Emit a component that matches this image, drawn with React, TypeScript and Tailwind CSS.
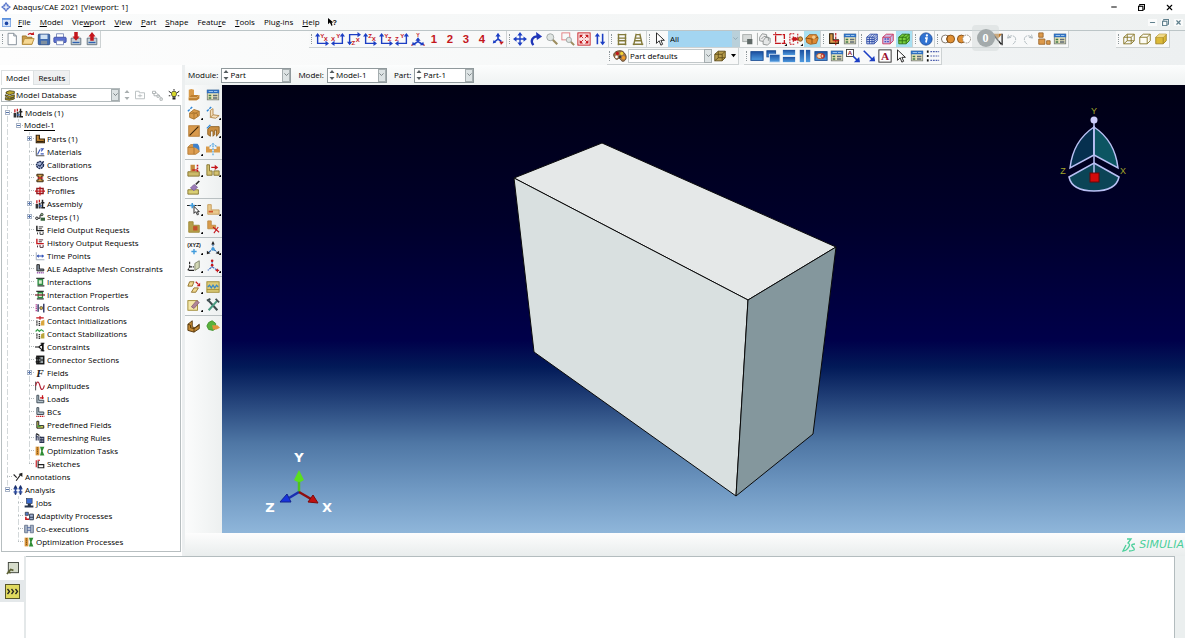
import type { ReactNode } from "react";
import { Minus, X } from "lucide-react";

const BLUE = "#1c3fc4";
const RED = "#c4161c";
const TAN = "#d99b4a";
const BROWN = "#7a4d12";

/* ---------- icon helpers ---------- */

function Svg({ children, size = 16 }: { children: ReactNode; size?: number }) {
  return (
    <svg viewBox="0 0 16 16" width={size} height={size} fill="none" className="block shrink-0 overflow-visible" aria-hidden="true">
      {children}
    </svg>
  );
}

function Letter({ x, y, children, fill = RED }: { x: number; y: number; children: string; fill?: string }) {
  return (
    <text x={x} y={y} fontSize="7" fontWeight="bold" fontFamily="Liberation Sans, sans-serif" fill={fill}>
      {children}
    </text>
  );
}

function CornerLeft({ v, h }: { v: string; h: string }) {
  return (
    <>
      <path d="M3 3V13H13" stroke={BLUE} strokeWidth="1.6" />
      <path d="M0 5L3 1L6 5ZM12 10L16 13L12 16Z" fill={BLUE} />
      <Letter x={6} y={7}>{v}</Letter>
      <Letter x={10} y={10}>{h}</Letter>
    </>
  );
}

function CornerRight({ v, h }: { v: string; h: string }) {
  return (
    <>
      <path d="M13 3V13H3" stroke={BLUE} strokeWidth="1.6" />
      <path d="M10 5L13 1L16 5ZM4 10L0 13L4 16Z" fill={BLUE} />
      <Letter x={6} y={7}>{v}</Letter>
      <Letter x={0} y={10}>{h}</Letter>
    </>
  );
}

function Digit({ children }: { children: string }) {
  return (
    <text x="8" y="13" textAnchor="middle" fontSize="13" fontWeight="bold" fontFamily="Liberation Sans, sans-serif" fill={RED}>
      {children}
    </text>
  );
}

function Cube({ face, line }: { face: string; line: string }) {
  return (
    <>
      <path d="M2 6L6 2.5H14V10L10.5 13.5H2Z" fill={face} stroke={line} />
      <path d="M2 6H10.5V13.5M10.5 6L14 2.5" stroke={line} />
    </>
  );
}

function Panel() {
  return (
    <>
      <rect x="1.5" y="2.5" width="13" height="11" fill="#e9e3b8" stroke="#777f78" />
      <rect x="1" y="2" width="14" height="4" fill="#2f6fc0" />
      <path d="M3 4h10" stroke="#a9d0f4" strokeDasharray="5 1" />
      <path d="M3 8.5h3M3 11.5h3" stroke="#3d7a4a" strokeWidth="1.6" />
      <path d="M8 8.5h5M8 11.5h5" stroke="#5b6a78" strokeWidth="1.6" />
    </>
  );
}

const ARROW = "M4 1V13L7 10L9 15L11 14L9 9.5H13Z";

const icons: Record<string, ReactNode> = {
  newFile: <path d="M3.5 1.5H10L13 4.5V14.5H3.5ZM10 1.5V4.5H13" fill="#fff" stroke="#7c8791" />,
  open: (
    <>
      <path d="M1.5 14V4.5H6L7 6H12.5V14Z" fill="#c99b4a" stroke="#9b7226" />
      <path d="M1.5 14L4 7.5H15L12.5 14Z" fill="#f6d893" stroke="#b48a37" />
      <path d="M8 3Q11 0 13 3" stroke={RED} strokeWidth="1.5" />
      <path d="M10.5 3.5H15L14.5 0Z" fill={RED} />
    </>
  ),
  save: (
    <>
      <rect x="1.5" y="2.5" width="13" height="12" rx="1" fill="#3f6bb0" stroke="#274a85" />
      <rect x="4" y="3" width="8" height="5" fill="#cfe2f4" />
      <rect x="4.5" y="10" width="7" height="4" fill="#7f8f9f" />
    </>
  ),
  print: (
    <>
      <path d="M4 6V2H12V6" fill="#fff" stroke="#7384b5" />
      <rect x="1" y="6" width="14" height="6" rx="1" fill="#5b6fd0" stroke="#3a4ba3" />
      <path d="M4 10H12V14.5H4Z" fill="#fff" stroke="#7384b5" />
    </>
  ),
  dbDown: (
    <>
      <path d="M2.5 7H13.5V14.5H2.5Z" fill="#c7d0d6" stroke="#5d6d7a" />
      <path d="M4 12H12" stroke="#2f62b0" strokeWidth="1.5" />
      <path d="M6 0H10V5H12L8 10L4 5H6Z" fill={RED} />
    </>
  ),
  dbUp: (
    <>
      <path d="M2.5 7H13.5V14.5H2.5Z" fill="#c7d0d6" stroke="#5d6d7a" />
      <path d="M4 12H12" stroke="#2f62b0" strokeWidth="1.5" />
      <path d="M6 10H10V5H12L8 0L4 5H6Z" fill={RED} />
    </>
  ),
  xy: <CornerLeft v="Y" h="X" />,
  yx: <CornerRight v="Y" h="X" />,
  xz: (
    <>
      <path d="M3 13V3H13" stroke={BLUE} strokeWidth="1.6" />
      <path d="M0 11L3 15L6 11ZM12 0L16 3L12 6Z" fill={BLUE} />
      <Letter x={10} y={11}>X</Letter>
      <Letter x={5} y={15}>Z</Letter>
    </>
  ),
  zx: <CornerLeft v="Z" h="X" />,
  yz: <CornerLeft v="Y" h="Z" />,
  zy: <CornerRight v="Y" h="Z" />,
  iso: (
    <>
      <path d="M8 8V11L3 14M8 11L13 14" stroke={BLUE} strokeWidth="1.8" />
      <path d="M5 10L8 6L11 10ZM1 15L2 11L6 15ZM15 15L14 11L10 15Z" fill={BLUE} />
      <text x="8" y="6" textAnchor="middle" fontSize="6" fontWeight="bold" fontFamily="Liberation Sans, sans-serif" fill={RED}>
        Y
      </text>
      <path d="M0 15h2M14 15h2" stroke={RED} />
    </>
  ),
  v1: <Digit>1</Digit>,
  v2: <Digit>2</Digit>,
  v3: <Digit>3</Digit>,
  v4: <Digit>4</Digit>,
  csys: (
    <>
      <path d="M8 2V8L3 12M8 8L12 11" stroke={BLUE} strokeWidth="1.8" />
      <path d="M5 5L8 1L11 5ZM2 13L3 9L6 12Z" fill={BLUE} />
      <path d="M10 11L13 13M11 14L14 11" stroke={RED} strokeWidth="1.5" />
    </>
  ),
  pan: (
    <>
      <path d="M8 3V13M3 8H13" stroke={BLUE} strokeWidth="1.5" />
      <path d="M8 0L11 4H5ZM8 16L11 12H5ZM0 8L4 5V11ZM16 8L12 5V11Z" fill={BLUE} />
    </>
  ),
  rotate: (
    <>
      <path d="M5 15C1 10 4 5 10 5" stroke="#2036b8" strokeWidth="2.6" />
      <path d="M8 0L15 5L9 9Z" fill="#2036b8" />
    </>
  ),
  zoom: (
    <>
      <path d="M8 8L14 14" stroke="#9c8d5f" strokeWidth="2.4" />
      <circle cx="6" cy="6" r="4" fill="#dfe5e2" stroke="#9da5a3" />
    </>
  ),
  zoomBox: (
    <>
      <rect x="1" y="1" width="9" height="8" stroke="#e0777a" />
      <path d="M10 10L15 15" stroke="#9c8d5f" strokeWidth="2.2" />
      <circle cx="9" cy="9" r="3" fill="#dfe5e2" stroke="#9da5a3" />
    </>
  ),
  fit: (
    <>
      <rect x="1" y="1" width="14" height="14" fill="#fbe3e3" stroke={RED} />
      <path d="M3 3H7L3 7ZM13 3H9L13 7ZM3 13H7L3 9ZM13 13H9L13 9Z" fill={RED} />
      <path d="M4 4L7 7M12 4L9 7M4 12L7 9M12 12L9 9" stroke={RED} />
    </>
  ),
  cycle: (
    <>
      <path d="M5 4V14M11 2V12" stroke={BLUE} strokeWidth="1.8" />
      <path d="M2 5L5 1L8 5ZM8 11L11 15L14 11Z" fill={BLUE} />
    </>
  ),
  persOff: <path d="M4 2V15M12 2V15M3 3H13M3 7H13M3 10H13M3 14H13" stroke="#837a3a" strokeWidth="1.6" />,
  persOn: <path d="M6 2L3 15M10 2L13 15M5 3H11M5 7H11M4 10H12M2 14H14" stroke="#837a3a" strokeWidth="1.6" />,
  cursor: <path d={ARROW} fill="#fff" stroke="#111" />,
  dim: (
    <>
      <rect x="2" y="3" width="10" height="8" fill="#d7dad9" stroke="#a3a8a7" />
      <rect x="7" y="8" width="6" height="6" fill="#5f6967" />
    </>
  ),
  stack: (
    <>
      <path d="M0.5 1V15" stroke="#a3a8a7" />
      <path d="M3 6L6 2L11 3V8L8 11L3 10Z" fill="#eee" stroke="#8a8f8f" />
      <path d="M7 10L10 6L15 7V12L12 15L7 14Z" fill="#e5e7e7" stroke="#8a8f8f" />
      <path d="M5 8L8 5L13 6V10" stroke="#8a8f8f" />
    </>
  ),
  selBox: (
    <>
      <path d="M3 3H13V13H3Z" stroke={RED} strokeWidth="1.5" strokeDasharray="7 1" />
      <path d="M0 3H3M3 0V3M12 13H15" stroke={RED} />
      <path d="M16 13V16H13Z" fill="#111" />
    </>
  ),
  selIn: (
    <>
      <path d="M1 2V14M1 2H6M1 14H6M10 2V14" stroke={RED} strokeWidth="1.2" strokeDasharray="2 1" />
      <path d="M3 8H13M5 5V11" stroke={RED} strokeWidth="1.6" />
      <circle cx="7" cy="8" r="2.2" fill={RED} />
      <circle cx="13" cy="8" r="2.5" fill={TAN} stroke={BROWN} />
      <path d="M16 13V16H13Z" fill="#111" />
    </>
  ),
  selPart: (
    <>
      <path d="M1 7L5 3L13 3L15 7L13 13L6 14L2 12Z" fill="#dd8b35" stroke="#a15f1a" />
      <path d="M1 7L8 8L15 6M8 8V13" stroke="#824c13" />
      <circle cx="10" cy="6" r="2" fill="#f4c98b" />
    </>
  ),
  mark: (
    <>
      <path d="M3 2H7V9H13V13H3Z" fill={TAN} stroke="#33220c" strokeWidth="1.3" />
      <path d="M10 1V15M7 10H15" stroke={RED} strokeWidth="1.3" strokeDasharray="3 1" />
    </>
  ),
  panel: <Panel />,
  meshCube: (
    <>
      <Cube face="#dbe4f6" line="#2746a3" />
      <path d="M2 8.5H10.5L14 5M2 11H10.5L14 7.5M5 6V13.5M8 6V13.5M5 6L8.5 2.5M8 6L11.5 2.5" stroke="#2746a3" />
    </>
  ),
  dotCube: (
    <>
      <Cube face="#cbbbe6" line="#c9305a" />
      <path d="M4 8H9M4 11H9" stroke="#4652bd" strokeWidth="1.5" strokeDasharray="2 1" />
    </>
  ),
  greenCube: (
    <>
      <Cube face="#78cf3d" line="#2c7011" />
      <path d="M2 10H10.5L14 6M6 6V13.5M6 6L10 2.5" stroke="#2c7011" />
    </>
  ),
  info: (
    <>
      <circle cx="8" cy="8" r="7" fill="#2f72d2" stroke="#1e4e9d" />
      <circle cx="9" cy="4" r="1.3" fill="#fff" />
      <path d="M7 7H9L8 12" stroke="#fff" strokeWidth="2" />
    </>
  ),
  boolA: (
    <>
      <circle cx="5" cy="8" r="4.5" fill="#fff" stroke="#72675a" />
      <circle cx="11" cy="8" r="4.5" fill="#e09034" stroke="#7b4a16" />
      <path d="M8 4Q5 8 8 12" stroke="#7b4a16" />
    </>
  ),
  boolB: (
    <>
      <circle cx="5" cy="8" r="4.5" fill="#e09034" stroke="#7b4a16" />
      <circle cx="11" cy="8" r="4.5" fill="#fff" stroke="#8d8579" strokeDasharray="2 1" />
    </>
  ),
  boolC: (
    <>
      <rect x="1" y="2" width="14" height="12" fill="#f3f4f3" />
      <path d="M2 2H15L10 8Z" fill="#bf7a2b" />
      <path d="M4 2L14 14M15 2V15" stroke="#222" strokeWidth="1.4" />
    </>
  ),
  undo: <path d="M3 7L4 3M3 7L7 6M3 7C8 1 15 6 11 12L9 14" stroke="#a9b3b8" strokeDasharray="6 1" />,
  redo: <path d="M13 7L12 3M13 7L9 6M13 7C8 1 1 6 5 12L7 14" stroke="#a9b3b8" strokeDasharray="6 1" />,
  regen: <path d="M2 1H7V6H2ZM2 8H9V14H2ZM11 10H15V14H11Z" fill="#dd9a4b" stroke="#9a6529" />,
  wire: (
    <>
      <path d="M2 6L6 2.5H14V10L10.5 13.5H2ZM2 6H10.5V13.5M10.5 6L14 2.5" stroke="#857321" />
      <path d="M6 2.5V10H14M2 13.5L6 10" stroke="#857321" />
    </>
  ),
  hidden: <Cube face="#fdfcf4" line="#857321" />,
  shaded: (
    <>
      <Cube face="#dcb937" line="#a08426" />
      <path d="M2 6L6 2.5H14L10.5 6Z" fill="#f0d987" />
    </>
  ),
  palette: (
    <>
      <path d="M8 2C3 2 0 5 1 8S4 13 6 11S9 15 12 14S16 9 14 6S11 2 8 2Z" fill="#a4794c" stroke="#52361c" />
      <circle cx="5" cy="5" r="1.8" fill={RED} />
      <circle cx="10" cy="5" r="1.8" fill="#f0d233" />
      <circle cx="12" cy="10" r="2" fill="#f19a25" />
      <circle cx="4" cy="9" r="1.5" fill="#fff" />
      <circle cx="8" cy="9" r="1.5" fill="#3a3a3a" />
    </>
  ),
  oliveCube: (
    <>
      <Cube face="#b89d4c" line="#5c4a17" />
      <path d="M6 2.5V10H14M2 13.5L6 10" stroke="#5c4a17" />
    </>
  ),
  vpOne: <rect x="1" y="3" width="14" height="10" fill="url(#vp)" stroke="#15478f" />,
  vpCascade: (
    <>
      <rect x="1" y="2" width="10" height="7" fill="url(#vp)" stroke="#15478f" />
      <rect x="4" y="6" width="12" height="9" fill="url(#vp)" stroke="#dce9f8" />
    </>
  ),
  vpRows: (
    <>
      <rect x="1" y="1" width="14" height="6" fill="url(#vp)" />
      <rect x="1" y="9" width="14" height="6" fill="url(#vp)" />
    </>
  ),
  vpCols: (
    <>
      <rect x="2" y="1" width="5" height="14" fill="url(#vp)" />
      <rect x="9" y="1" width="5" height="14" fill="url(#vp)" />
    </>
  ),
  vpLink: (
    <>
      <rect x="1" y="3" width="14" height="10" fill="url(#vp)" stroke="#15478f" />
      <ellipse cx="7" cy="8" rx="4" ry="3" fill="#f7d9b0" stroke="#c0521f" />
      <ellipse cx="10" cy="8" rx="2" ry="2.5" stroke={RED} />
    </>
  ),
  noteArrow: (
    <>
      <rect x="0.5" y="0.5" width="8" height="8" fill="#fff" stroke="#333" />
      <Letter x={2} y={7} fill="#8a1430">A</Letter>
      <path d="M8 8L13 13" stroke={BLUE} strokeWidth="1.8" />
      <path d="M9 15H16L15 9Z" fill={BLUE} />
    </>
  ),
  blueArrow: (
    <>
      <path d="M2 2L12 12" stroke={BLUE} strokeWidth="1.8" />
      <path d="M8 14H15L14 8Z" fill={BLUE} />
    </>
  ),
  noteA: (
    <>
      <rect x="1" y="1" width="14" height="14" fill="#fff" stroke="#222" />
      <text x="8" y="13" textAnchor="middle" fontSize="13" fontWeight="bold" fontFamily="Liberation Serif, serif" fill="#9b1030">
        A
      </text>
    </>
  ),
  list: (
    <>
      <path d="M1 3h2M1 8h2M1 13h2" stroke="#111" strokeWidth="2.5" />
      <path d="M5 3h10M5 8h10M5 13h10" stroke="#4d5fae" strokeWidth="1.2" strokeDasharray="2 1" />
    </>
  ),

  /* toolbox */
  tPart: (
    <>
      <path d="M2 2L5 1L8 2V8H14V12L11 14H2Z" fill={TAN} />
      <path d="M5 8H14V12L11 14H2V11Z" fill="#bd7f30" />
      <path d="M2 11H11L14 8" stroke="#e8bb7c" />
    </>
  ),
  tExtrude: (
    <>
      <path d="M3 8L8 4L14 6V11L8 15L3 13Z" fill={TAN} stroke="#a8742d" />
      <path d="M8 15V9L14 6M8 9L3 8M6 7L12 9V12" stroke="#a8742d" />
      <path d="M1 6L6 1" stroke="#2f86d5" strokeWidth="1.6" strokeDasharray="3 1" />
    </>
  ),
  tShell: (
    <>
      <path d="M5 5L8 3V10L15 11L11 14L5 13Z" fill="#f3dfbd" stroke="#b08445" />
      <path d="M5 13L8 10" stroke="#b08445" />
      <path d="M1 6L6 1" stroke="#2f86d5" strokeWidth="1.6" strokeDasharray="3 1" />
    </>
  ),
  tWire: (
    <>
      <rect x="2" y="2" width="12" height="12" fill="#d99a4c" stroke="#b47a33" />
      <path d="M3 13L13 3" stroke="#3d2609" strokeWidth="1.3" />
    </>
  ),
  tCut: (
    <>
      <path d="M2 6L5 3H15V10L12 14V7H10V12L8 14V8H5V14L2 12Z" fill="#c98e42" stroke="#8a5c1c" />
      <path d="M1 5L5 1" stroke="#2f86d5" strokeWidth="1.6" />
    </>
  ),
  tRound: (
    <>
      <path d="M1 6L4 3H12L14 11L10 14H1Z" fill="#dd9d50" stroke="#b47a33" />
      <path d="M1 6H8V14" stroke="#a8742d" />
      <path d="M7 2H12Q15 5 14 10Q11 6 7 6Z" fill="#3f82cc" />
    </>
  ),
  tMirror: (
    <>
      <path d="M0 5H4V8H7V12H0ZM16 5H12V8H9V12H16Z" fill={TAN} />
      <path d="M8 1V15M4 5L7 3M12 5L9 3" stroke="#3f9bdc" strokeWidth="1.3" strokeDasharray="2 1" />
    </>
  ),
  tHole: (
    <>
      <path d="M1 10H14V15H1Z" fill="#cdbb6a" stroke="#80702a" />
      <path d="M4 2H9V10H4Z" fill="#c58a3c" />
      <path d="M12 2V10" stroke={RED} strokeWidth="1.8" strokeDasharray="2 1" />
      <path d="M6 8H12" stroke={RED} strokeWidth="1.4" />
    </>
  ),
  tMove: (
    <>
      <path d="M1 2H4V9H7V14H1ZM9 9H15V14H9Z" fill="#d4c271" stroke="#80702a" />
      <path d="M6 5H11" stroke={RED} strokeWidth="1.4" />
      <path d="M10 2L14 5L10 8Z" fill={RED} />
    </>
  ),
  tErase: (
    <>
      <path d="M1 10H13V15H1Z" fill="#d9cf74" stroke="#80702a" />
      <path d="M4 8L8 4L12 7L8 11Z" fill="#9b79b8" stroke="#7a6292" />
      <path d="M10 4L14 0" stroke="#333" strokeWidth="2" />
    </>
  ),
  tPick: (
    <>
      <path d="M0 4H16" stroke="#222" strokeWidth="1.4" strokeDasharray="5 1" />
      <path d="M6 1V7M3 4H9" stroke="#3f9bdc" strokeWidth="1.8" />
      <path d="M8 5V13L10 11L12 15L13 14L12 11H14Z" fill="#fff" stroke="#111" />
    </>
  ),
  tEdge: (
    <>
      <path d="M2 3H6V9H15V14H2Z" fill="#e8c98d" stroke="#c69a57" />
      <path d="M3 11H8" stroke="#d0532c" strokeWidth="2" />
    </>
  ),
  tCell: (
    <>
      <path d="M2 2H7V6H14V14H2Z" fill="#b6a04a" stroke="#9c8734" />
      <rect x="7" y="7" width="5" height="5" fill="#c3502c" />
    </>
  ),
  tCutCell: (
    <>
      <path d="M2 1H6V6H11V10H2Z" fill={TAN} stroke="#bd8a45" />
      <path d="M8 8L15 14M14 8L9 15" stroke={RED} strokeWidth="1.2" />
    </>
  ),
  tXyz: (
    <>
      <text x="8" y="7" textAnchor="middle" fontSize="6" fontWeight="bold" fontFamily="Liberation Sans, sans-serif" fill="#111">
        (XYZ)
      </text>
      <path d="M8 9V15M5 12H11" stroke="#3f9bdc" strokeWidth="1.6" />
    </>
  ),
  tAxis: (
    <>
      <path d="M8 2V9L3 13M8 9L13 13" stroke="#2f68a8" strokeWidth="1.3" strokeDasharray="4 1" />
      <path d="M6 4L8 0L10 4ZM1 15V11L5 14ZM15 15V11L11 14Z" fill="#222" />
      <circle cx="8" cy="9" r="2" fill="#3f9bdc" />
    </>
  ),
  tPlane: (
    <>
      <path d="M9 5L14 2V10L9 13Z" fill="#d2d7b4" stroke="#7a8066" />
      <path d="M3 3V9L1 13M3 9H8" stroke="#222" strokeWidth="1.3" strokeDasharray="3 1" />
      <path d="M2 13H8" stroke="#222" strokeWidth="1.5" />
    </>
  ),
  tCsys: (
    <>
      <path d="M7 2V9L2 13M7 9L13 13" stroke="#3669c0" strokeWidth="1.3" strokeDasharray="3 1" />
      <circle cx="7" cy="2" r="1.5" fill={RED} />
      <circle cx="7" cy="7" r="1.5" fill={RED} />
      <path d="M11 13H15M13 11V15" stroke={RED} strokeWidth="1.3" />
    </>
  ),
  tRepeat: (
    <>
      <path d="M1 7L3 2H8L6 7ZM5 14L8 9H13L10 14Z" fill="#f1d991" stroke="#8b6d22" />
      <path d="M10 2L13 5" stroke={RED} strokeWidth="1.4" />
      <path d="M15 3V7H11Z" fill={RED} />
    </>
  ),
  tMesh: (
    <>
      <rect x="1" y="2" width="14" height="12" fill="#dccb79" stroke="#9b862c" />
      <path d="M2 8L4 6L6 9L8 6L10 9L12 6L14 8" stroke="#3a87c4" strokeWidth="1.5" />
      <path d="M1 11H15" stroke="#9b862c" />
    </>
  ),
  tEdit: (
    <>
      <rect x="1" y="3" width="11" height="11" fill="#f4e7a9" stroke="#9b862c" />
      <path d="M5 10L11 3L14 5L8 12Z" fill="#b08598" stroke="#8d6577" />
    </>
  ),
  tTools: (
    <>
      <path d="M3 3L13 14" stroke="#3b4a4c" strokeWidth="2.4" />
      <path d="M13 3L3 14" stroke="#4a9b80" strokeWidth="2.4" />
      <path d="M1 3L5 1M11 1L15 5" stroke="#3b4a4c" strokeWidth="2" />
    </>
  ),
  tBlock: (
    <>
      <path d="M1 6L6 2V9L9 10L14 6V11L8 15L1 13Z" fill="#c48a35" stroke="#4f330b" />
      <path d="M1 6L4 7V10L8 11V15M8 11L14 7" stroke="#4f330b" />
    </>
  ),
  tGear: (
    <>
      <path d="M1 8L3 4L7 2L11 5L11 11L8 13L3 12Z" fill="#59b23b" stroke="#3c8f27" />
      <path d="M7 7H13L16 10L12 12H8Z" fill="#e0933d" />
    </>
  ),

  /* model tree */
  models: (
    <>
      <path d="M1 8H5V15H1ZM6 6H9V15H6Z" fill="#333" />
      <path d="M3 2V7M7 1V5" stroke={RED} strokeWidth="2" />
      <path d="M12 1V15M10 6H15M10 14H16" stroke="#222" strokeWidth="2.4" />
      <path d="M6 11H11" stroke="#3a68b8" strokeWidth="2" />
    </>
  ),
  part: (
    <>
      <path d="M2 2H7V8H15V14H2Z" fill="#c98a35" stroke="#33220c" strokeWidth="1.8" />
      <path d="M3 12H14" stroke="#33220c" strokeWidth="2" />
    </>
  ),
  materials: (
    <>
      <path d="M2 1V14H15" stroke="#444" strokeWidth="1.5" />
      <path d="M4 12L8 4M9 3H13L10 7M9 11H14" stroke="#3c58b8" strokeWidth="1.8" />
    </>
  ),
  calib: (
    <>
      <circle cx="8" cy="8" r="5.5" fill="#a9b9dc" stroke="#1e2b52" strokeWidth="2.4" strokeDasharray="3 1" />
      <path d="M5 8L8 10L14 2" stroke="#1e2b52" strokeWidth="1.8" />
    </>
  ),
  section: (
    <>
      <path d="M3 2H13V5H10V11H13V14H3V11H6V5H3Z" fill="#d8a24a" stroke="#33220c" strokeWidth="1.5" />
      <path d="M4 8H13" stroke={RED} strokeWidth="2" />
    </>
  ),
  profile: (
    <>
      <path d="M3 4H13V12H3Z" stroke="#8e1a1f" strokeWidth="2.2" />
      <path d="M8 1V15M0 8H16" stroke={RED} strokeWidth="2" />
    </>
  ),
  steps: (
    <>
      <circle cx="3" cy="10" r="2" stroke="#222" strokeWidth="1.6" />
      <path d="M5 10H8V5H12" stroke="#222" strokeWidth="1.6" />
      <circle cx="11" cy="4" r="2" fill="#8cae83" stroke="#222" />
      <path d="M9 9H16V14H9Z" fill="#39633d" />
    </>
  ),
  output: (
    <>
      <path d="M3 1V9H14" stroke="#111" strokeWidth="2.2" />
      <path d="M6 3H13M6 6H11M4 12V15M8 11V15H13V11" stroke="#444" strokeWidth="1.6" />
    </>
  ),
  history: (
    <>
      <path d="M3 1V9H14" stroke={RED} strokeWidth="2.2" />
      <path d="M6 3H13M6 6H11M4 12V15M8 11V15H13V11" stroke="#55333d" strokeWidth="1.6" />
    </>
  ),
  time: (
    <>
      <path d="M2 2V14H15" stroke="#9fa9bb" strokeWidth="1.5" />
      <path d="M3 8H14" stroke="#3455b8" strokeWidth="1.8" />
      <path d="M3 8L6 5V11ZM14 8L11 5V11Z" fill="#3455b8" />
    </>
  ),
  ale: (
    <>
      <path d="M3 1H7V8H14V11H3Z" fill="#8492a0" stroke="#222" strokeWidth="1.5" />
      <path d="M3 14H15" stroke="#9b5bae" strokeWidth="2.4" strokeDasharray="2 1" />
    </>
  ),
  interact: (
    <>
      <path d="M2 2H15M4 14H15" stroke="#333" strokeWidth="2" />
      <path d="M5 4H12V12H5Z" fill="#d9efcf" stroke="#2f8c44" strokeWidth="2.2" />
    </>
  ),
  interactProp: (
    <>
      <path d="M2 2H14M3 14H14" stroke="#333" strokeWidth="2" />
      <path d="M5 4H12V12H5Z" fill="#d9efcf" stroke="#2f8c44" strokeWidth="2" />
      <path d="M0 8H16" stroke="#7c1f2c" strokeWidth="2" />
    </>
  ),
  contact: (
    <>
      <path d="M2 2V14" stroke="#b02c8a" strokeWidth="2" strokeDasharray="2 1" />
      <path d="M5 2V14M14 1V15" stroke="#3a3f6b" strokeWidth="2.4" />
      <circle cx="10" cy="8" r="2.5" fill="#d3ad45" stroke="#333" />
    </>
  ),
  contactInit: (
    <>
      <path d="M2 3H14M8 0V6" stroke={RED} strokeWidth="1.8" />
      <path d="M3 7V16M7 8V16" stroke="#333" strokeWidth="2.4" strokeDasharray="2 1" />
      <path d="M10 8L15 6V15H9Z" fill="#d9a63c" />
    </>
  ),
  contactStab: (
    <>
      <path d="M1 4L4 1L7 4L10 1L14 4" stroke="#2f9c44" strokeWidth="1.8" />
      <path d="M3 7V16M7 8V16" stroke="#333" strokeWidth="2.4" strokeDasharray="2 1" />
      <path d="M10 8L15 6V15H9Z" fill="#b9a63c" />
    </>
  ),
  constraint: <path d="M13 1V15M0 8H6L12 3V13L6 8M9 2H15M9 14H15" stroke="#111" strokeWidth="1.8" />,
  connector: (
    <>
      <rect x="3" y="2" width="11" height="12" fill="#9aa4a8" stroke="#111" strokeWidth="2.2" />
      <path d="M1 5H9M1 11H9M6 2V14M8 8H14" stroke="#111" strokeWidth="1.8" />
    </>
  ),
  fields: (
    <text x="2" y="14" fontSize="18" fontStyle="italic" fontWeight="bold" fontFamily="Liberation Serif, serif" fill="#222">
      F
    </text>
  ),
  amplitude: (
    <>
      <path d="M1 15V1" stroke="#333" strokeWidth="1.4" />
      <path d="M1 8C3 -1 6 0 8 8S13 15 15 7" stroke="#b02435" strokeWidth="1.8" />
    </>
  ),
  loads: (
    <>
      <path d="M3 2H6V10H14V14H3Z" fill="#b4c2cc" stroke="#45525c" strokeWidth="1.6" />
      <path d="M12 2V8M8 6H14" stroke={RED} strokeWidth="2" />
    </>
  ),
  bcs: (
    <>
      <path d="M3 1H6V8H14V12H3Z" fill="#b4c2cc" stroke="#45525c" strokeWidth="1.6" />
      <path d="M2 15H15" stroke={RED} strokeWidth="2" strokeDasharray="2 1" />
    </>
  ),
  predef: (
    <>
      <path d="M3 2H6V9H14V13H3Z" fill="#e1de5f" stroke="#222" strokeWidth="1.6" />
      <path d="M4 10H9" stroke="#2f9c44" strokeWidth="2" />
    </>
  ),
  remesh: (
    <>
      <path d="M2 2V12M5 5V12M2 6H6M8 5V15H14V7H8M11 7V15M8 11H14" stroke="#2a3352" strokeWidth="1.8" />
      <path d="M2 1L7 4" stroke="#222" strokeWidth="2" />
    </>
  ),
  optimize: (
    <>
      <rect x="1" y="1" width="6" height="14" fill="#d8943a" />
      <path d="M4 2V14" stroke="#7a4d12" strokeWidth="1.4" strokeDasharray="2 1" />
      <path d="M8 1H15L12 8L15 15H8L10 8Z" fill="#2f8c34" />
    </>
  ),
  sketch: (
    <>
      <path d="M5 3V9H14V14H5Z" stroke="#222" strokeWidth="1.8" />
      <path d="M2 2V13M4 2H8" stroke={RED} strokeWidth="1.8" />
    </>
  ),
  annotation: (
    <>
      <path d="M1 4L6 9M13 3L5 14" stroke="#222" strokeWidth="1.8" />
      <path d="M15 1V8L9 3Z" fill="#222" />
    </>
  ),
  analysis: (
    <>
      <path d="M4 1V15M12 1V15M1 6H7M9 6H15M1 11H7M9 11H15" stroke="#2b4a9e" strokeWidth="2.4" />
      <path d="M4 0L7 5H1ZM12 0L15 5H9ZM4 16L6 13H2ZM12 16L14 13H10Z" fill="#1b2f68" />
    </>
  ),
  job: (
    <>
      <rect x="4" y="1" width="9" height="8" fill="#3a6bd0" stroke="#27344b" />
      <path d="M1 12H15V15H1ZM6 9H11V12H6Z" fill="#27344b" />
    </>
  ),
  adaptivity: (
    <>
      <path d="M2 2H7V7H2Z" fill="#4f78c6" stroke="#222" />
      <path d="M3 9V13H8" stroke={RED} strokeWidth="2.4" />
      <path d="M9 5H15V14H9ZM9 10H15" fill="#a4b4d4" stroke="#27344b" strokeWidth="1.5" />
    </>
  ),
  coexec: (
    <>
      <path d="M1 2H6V14H1ZM10 2H15V14H10Z" fill="#a5b1c4" stroke="#66758d" strokeWidth="1.4" />
      <path d="M5 6H11M5 10H11" stroke="#4964a5" strokeWidth="1.8" />
    </>
  ),
  database: (
    <path d="M3 3L8 1L15 2V5L8 7L3 5ZM2 7L8 9L15 7V10L8 12L2 9ZM2 11L8 13L15 11V13L8 15L2 14Z" fill="#bda72c" stroke="#221e05" />
  ),
  folderUp: <path d="M2 3H7V5H14V13H2ZM5 9H11M8 7V11" stroke="#b6bcbd" strokeWidth="1.2" />,
  filter: <path d="M2 3H6V6H2ZM8 8H11V11H8ZM12 12H15V15H12ZM4 6V9H8M6 4L14 12" stroke="#a9afb0" strokeWidth="1.2" />,
  bulb: (
    <>
      <path d="M1 3L4 5M15 3L12 5M1 9H3M13 9H15M8 0V2" stroke="#222" strokeWidth="1.3" />
      <path d="M8 3C4 3 4 7 6 10H10C12 7 12 3 8 3Z" fill="#d8d92c" stroke="#222" />
      <path d="M6 11H10V14H6Z" fill="#222" />
    </>
  ),
};

/* ---------- toolbars ---------- */

function ToolButton({ icon, active = false }: { icon: string; active?: boolean }) {
  return (
    <button
      type="button"
      aria-label={icon}
      className={`flex h-4 w-4 shrink-0 items-center justify-center ${active ? "bg-[#a9e0f2]" : ""}`}
    >
      <Svg size={14}>{icons[icon]}</Svg>
    </button>
  );
}

function Toolbar({ children, narrow = false }: { children: ReactNode; narrow?: boolean }) {
  return (
    <div role="toolbar" className="flex h-[17px] shrink-0 items-center border-b border-r border-[#cdd2d3] bg-[#f8f9f9]">
      <span className={`flex h-full shrink-0 items-center justify-center ${narrow ? "w-1" : "w-[5px]"}`}>
        <span className="h-[10px] border-l border-dotted border-[#8e979a]" />
      </span>
      {children}
    </div>
  );
}

function Buttons({ names, active = [] }: { names: string[]; active?: string[] }) {
  return (
    <>
      {names.map((name, i) => (
        <ToolButton key={i} icon={name} active={active.includes(name)} />
      ))}
    </>
  );
}

function ArrowCap() {
  return (
    <span className="pointer-events-none absolute inset-y-0 right-0 flex w-2 items-center justify-center border border-[#a5adaf] bg-[#dde3e4]">
      <svg viewBox="0 0 6 4" className="w-[5px]" fill="none" aria-hidden="true">
        <path d="M0.5 0.5L3 3L5.5 0.5" stroke="#6b7477" />
      </svg>
    </span>
  );
}

function Spinner({ color }: { color: string }) {
  return (
    <svg viewBox="0 0 6 10" className="h-[10px] w-[6px]" fill={color} aria-hidden="true">
      <path d="M3 0L5.5 3H0.5ZM3 10L5.5 7H0.5Z" />
    </svg>
  );
}

function RestoreIcon() {
  return (
    <svg viewBox="0 0 8 8" width="7" height="7" fill="none" className="block" aria-hidden="true">
      <path d="M2 2V0.5H7.5V6H6" stroke="currentColor" strokeWidth="1.3" />
      <rect x="0.6" y="2.6" width="5" height="5" stroke="currentColor" strokeWidth="1.3" />
    </svg>
  );
}

function ModuleSelect({ label, value, className }: { label: string; value: string; className: string }) {
  return (
    <label className="flex items-center gap-[3px]">
      {label}
      <span className={`relative flex h-[15px] items-center border border-[#90999c] bg-white ${className}`}>
        <span className="flex w-2 shrink-0 justify-center">
          <Spinner color="#555d60" />
        </span>
        <select className="h-full w-full appearance-none bg-transparent pr-2 outline-none">
          <option>{value}</option>
        </select>
        <ArrowCap />
      </span>
    </label>
  );
}

/* ---------- menu ---------- */

const menus: [string, string, string][] = [
  ["", "F", "ile"],
  ["", "M", "odel"],
  ["Vie", "w", "port"],
  ["", "V", "iew"],
  ["", "P", "art"],
  ["", "S", "hape"],
  ["Featu", "r", "e"],
  ["", "T", "ools"],
  ["Plu", "g", "-ins"],
  ["", "H", "elp"],
];

/* ---------- model tree ---------- */

type Node = { label: string; level: number; icon?: string; open?: boolean; last?: boolean; rails?: boolean[]; current?: boolean };

const inModel = (label: string, icon: string, open?: boolean): Node => ({ label, icon, level: 2, open, rails: [true, false] });

const tree: Node[] = [
  { label: "Models (1)", icon: "models", level: 0, open: true },
  { label: "Model-1", level: 1, open: true, rails: [true], last: true, current: true },
  inModel("Parts (1)", "part", false),
  inModel("Materials", "materials"),
  inModel("Calibrations", "calib"),
  inModel("Sections", "section"),
  inModel("Profiles", "profile"),
  inModel("Assembly", "models", false),
  inModel("Steps (1)", "steps", false),
  inModel("Field Output Requests", "output"),
  inModel("History Output Requests", "history"),
  inModel("Time Points", "time"),
  inModel("ALE Adaptive Mesh Constraints", "ale"),
  inModel("Interactions", "interact"),
  inModel("Interaction Properties", "interactProp"),
  inModel("Contact Controls", "contact"),
  inModel("Contact Initializations", "contactInit"),
  inModel("Contact Stabilizations", "contactStab"),
  inModel("Constraints", "constraint"),
  inModel("Connector Sections", "connector"),
  inModel("Fields", "fields", false),
  inModel("Amplitudes", "amplitude"),
  inModel("Loads", "loads"),
  inModel("BCs", "bcs"),
  inModel("Predefined Fields", "predef"),
  inModel("Remeshing Rules", "remesh"),
  inModel("Optimization Tasks", "optimize"),
  { ...inModel("Sketches", "sketch"), last: true },
  { label: "Annotations", icon: "annotation", level: 0 },
  { label: "Analysis", icon: "analysis", level: 0, open: true, last: true },
  { label: "Jobs", icon: "job", level: 1, rails: [false] },
  { label: "Adaptivity Processes", icon: "adaptivity", level: 1, rails: [false] },
  { label: "Co-executions", icon: "coexec", level: 1, rails: [false] },
  { label: "Optimization Processes", icon: "optimize", level: 1, rails: [false], last: true },
];

function Rail({ show }: { show: boolean }) {
  return (
    <span className="flex h-full w-[11px] shrink-0 justify-center">
      {show && <span className="h-full border-l border-dashed border-[#d3d8da]" />}
    </span>
  );
}

function TreeRow({ node }: { node: Node }) {
  return (
    <li role="treeitem" aria-level={node.level + 1} className="flex h-[13px] items-center whitespace-nowrap">
      {node.rails?.map((show, i) => <Rail key={i} show={show} />)}
      <span className="relative flex h-full w-[11px] shrink-0 items-center justify-center">
        <span className={`absolute left-[5px] top-0 border-l border-dashed border-[#d3d8da] ${node.last ? "h-1/2" : "h-full"}`} />
        <span className="absolute left-[5px] top-[6px] w-[5px] border-t border-dotted border-[#b3babc]" />
        {node.open !== undefined && (
          <button type="button" aria-label={node.open ? "Collapse" : "Expand"} className="relative bg-white">
            <svg viewBox="0 0 5 5" width="5" height="5" className="block" fill="none" aria-hidden="true">
              <rect x="0.5" y="0.5" width="4" height="4" stroke="#a9b4c6" />
              <path d={node.open ? "M1 2.5H4" : "M1 2.5H4M2.5 1V4"} stroke="#5674aa" />
            </svg>
          </button>
        )}
      </span>
      {node.icon && (
        <span className="mr-0.5">
          <Svg size={10}>{icons[node.icon]}</Svg>
        </span>
      )}
      <span className={node.current ? "border-b border-black leading-[10px]" : ""}>{node.label}</span>
    </li>
  );
}

/* ---------- toolbox ---------- */

const toolbox: string[][] = [
  ["tPart", "panel", "tExtrude", "tShell", "tWire", "tCut", "tRound", "tMirror"],
  ["tHole", "tMove", "tErase"],
  ["tPick", "tEdge", "tCell", "tCutCell"],
  ["tXyz", "tAxis", "tPlane", "tCsys"],
  ["tRepeat", "tMesh", "tEdit", "tTools"],
  ["tBlock", "tGear"],
];

const noFlyout = ["tPart", "panel", "tMirror", "tErase", "tCutCell", "tMesh", "tTools", "tBlock", "tGear"];

function Toolbox() {
  return (
    <div className="w-[37px] shrink-0 bg-gradient-to-r from-[#fbfcfc] to-[#edf0f0] pt-px">
      {toolbox.map((group, i) => (
        <div key={i} className={`grid grid-cols-2 ${i > 0 ? "mt-px border-t border-[#b9c0c2] pt-px" : ""}`}>
          {group.map((name) => (
            <button key={name} type="button" aria-label={name} className="relative flex h-[18px] items-center pl-0.5">
              <Svg size={14}>{icons[name]}</Svg>
              {!noFlyout.includes(name) && (
                <span className="absolute bottom-0.5 right-px h-0.5 w-0.5 rounded-tl-full bg-black" />
              )}
            </button>
          ))}
        </div>
      ))}
    </div>
  );
}

/* ---------- viewport ---------- */

function Viewport() {
  return (
    <div className="relative min-w-0 flex-1 bg-[linear-gradient(180deg,#000014_0%,#00002a_30%,#00004a_57%,#021a58_63%,#4f77a5_80%,#6f98c2_90%,#8fb6da_100%)]">
      <svg viewBox="222 85 963 448" className="absolute inset-0 h-full w-full" fill="none" role="img" aria-label="Part-1">
        <g stroke="#0a0a0a" strokeLinejoin="round">
          <path d="M514 178L602 143L836 247L748 300Z" fill="#e5e8e8" />
          <path d="M514 178L748 300L736 496L534 352Z" fill="#d9e0e0" />
          <path d="M748 300L836 247L813 434L736 496Z" fill="#84979d" />
        </g>

        {/* view compass */}
        <g stroke="#b9c0f4" strokeWidth="1.5">
          <path d="M1094 127Q1073 141 1070 168L1094 155Z" fill="#06304f" />
          <path d="M1094 127Q1115 141 1118 168L1094 155Z" fill="#0c5562" />
          <path d="M1094 163L1119 177Q1116 191 1094 191Q1072 191 1069 177Z" fill="#0b4456" />
          <path d="M1094 120V174" />
        </g>
        <circle cx="1094" cy="120" r="3.5" fill="#ccccfa" />
        <rect x="1090" y="173" width="9" height="9" fill="#d50a0a" stroke="#6d0606" />
        <g fill="#a3a52a" fontSize="9" textAnchor="middle" fontFamily="Liberation Sans, sans-serif">
          <text x="1094" y="114">Y</text>
          <text x="1063" y="174">Z</text>
          <text x="1123" y="174">X</text>
        </g>

        {/* coordinate triad */}
        <path d="M299 492V478" stroke="#4fc21e" strokeWidth="2.5" />
        <path d="M299 470L304 480Q299 484 294 480Z" fill="#5be01c" />
        <path d="M299 492L289 498" stroke="#1b2fb0" strokeWidth="2.5" />
        <path d="M280 502L287 494L291 502Z" fill="#1733dd" stroke="#122390" />
        <path d="M299 492L311 499" stroke="#8e0d10" strokeWidth="2.5" />
        <path d="M318 503L313 495L308 502Z" fill="#c01010" stroke="#7c0b0b" />
        <g fill="#fff" fontSize="13" fontWeight="bold" textAnchor="middle" fontFamily="DejaVu Sans, sans-serif">
          <text x="299" y="462">Y</text>
          <text x="270" y="512">Z</text>
          <text x="327" y="512">X</text>
        </g>
      </svg>
    </div>
  );
}

/* ---------- page ---------- */

export default function App() {
  return (
    <div className="flex min-h-screen flex-col bg-[#f2f4f4] font-['Open_Sans','Noto_Sans',sans-serif] text-[8px] leading-[12px] text-black">
      <svg width="0" height="0" className="absolute" aria-hidden="true">
        <defs>
          <linearGradient id="vp" x1="0" y1="0" x2="0" y2="1">
            <stop offset="0" stopColor="#1b4f9f" />
            <stop offset="1" stopColor="#4f9be0" />
          </linearGradient>
        </defs>
      </svg>

      {/* title bar */}
      <header className="flex h-[14px] items-center bg-white pl-px">
        <svg viewBox="0 0 16 16" width="10" height="10" fill="#5b78cc" className="mr-0.5" aria-hidden="true">
          <path d="M8 0L11 4H5ZM8 16L5 12H11ZM0 8L4 5V11ZM16 8L12 11V5ZM4 4H7V7H4ZM9 4H12V7H9ZM4 9H7V12H4ZM9 9H12V12H9Z" />
        </svg>
        <h1>Abaqus/CAE 2021 [Viewport: 1]</h1>
        <div className="ml-auto flex items-center gap-5 pr-[11px]">
          <button type="button" aria-label="Minimize"><Minus size={8} strokeWidth={3} /></button>
          <button type="button" aria-label="Restore"><RestoreIcon /></button>
          <button type="button" aria-label="Close"><X size={9} strokeWidth={3} /></button>
        </div>
      </header>

      {/* menu bar */}
      <nav className="flex h-[17px] items-center border-b border-[#bcc5c7] bg-gradient-to-r from-[#fbfcfc] to-[#eef1f1] pl-0.5">
        <svg viewBox="0 0 10 10" width="9" height="9" className="mr-[7px]" aria-hidden="true">
          <rect x="0.5" y="0.5" width="9" height="9" fill="#d9e6fa" stroke="#7fa7e4" />
          <path d="M0 0H10V2H0Z" fill="#5b90de" />
          <circle cx="5" cy="6" r="2" fill="#1c45a4" />
        </svg>
        <div className="flex gap-[9px]">
          {menus.map(([before, key, after]) => (
            <button key={before + key + after} type="button">
              {before}<u>{key}</u>{after}
            </button>
          ))}
        </div>
        <button type="button" aria-label="Context help" className="ml-2 flex items-center">
          <svg viewBox="0 0 10 10" width="9" height="9" className="overflow-visible" aria-hidden="true">
            <path d="M0 0V7L2 5L4 9L5 8L4 5H6Z" />
            <text x="5" y="8" fontSize="8" fontWeight="bold" fontFamily="Liberation Sans, sans-serif">?</text>
          </svg>
        </button>
        <div className="ml-auto flex gap-1 pr-0.5 text-[#5f7f8c]">
          <button type="button" aria-label="Minimize viewport" className="bg-white/70 px-px"><Minus size={7} strokeWidth={4} /></button>
          <button type="button" aria-label="Restore viewport" className="bg-white/70 px-px"><RestoreIcon /></button>
          <button type="button" aria-label="Close viewport" className="bg-white/70 px-px"><X size={7} strokeWidth={4} /></button>
        </div>
      </nav>

      {/* toolbars */}
      <div className="bg-gradient-to-r from-[#fdfdfd] via-[#f6f8f8] to-[#edf0f1]">
        <div className="flex">
          <Toolbar narrow>
            <Buttons names={["newFile", "open", "save", "print", "dbDown", "dbUp"]} />
          </Toolbar>
          <div className="ml-[208px] flex">
            <Toolbar>
              <Buttons names={["xy", "yx", "xz", "zx", "yz", "zy", "iso", "v1", "v2", "v3", "v4", "csys"]} />
            </Toolbar>
            <Toolbar>
              <Buttons names={["pan", "rotate", "zoom", "zoomBox", "fit", "cycle"]} />
            </Toolbar>
            <Toolbar>
              <Buttons names={["persOff", "persOn"]} />
            </Toolbar>
            <Toolbar>
              <ToolButton icon="cursor" />
              <span className="relative flex h-full w-[72px]">
                <select aria-label="Selection filter" className="h-full w-full appearance-none bg-[#a3d5f1] pl-0.5 outline-none">
                  <option>All</option>
                </select>
                <span className="pointer-events-none absolute inset-y-0 right-0 flex w-2 items-center bg-[#b9d0da] pl-px">
                  <svg viewBox="0 0 6 4" className="w-[5px]" fill="none" aria-hidden="true">
                    <path d="M0.5 0.5L3 3L5.5 0.5" stroke="#8ba3ae" />
                  </svg>
                </span>
              </span>
              <Buttons names={["dim", "stack", "selBox", "selIn", "selPart"]} active={["selPart"]} />
            </Toolbar>
            <Toolbar>
              <Buttons names={["mark", "panel"]} />
            </Toolbar>
            <Toolbar>
              <Buttons names={["meshCube", "dotCube", "greenCube"]} active={["greenCube"]} />
            </Toolbar>
            <Toolbar>
              <Buttons names={["info"]} />
            </Toolbar>
            <Toolbar>
              <Buttons names={["boolA", "boolB"]} />
              <span className="relative h-4 w-4">
                <span className="absolute -top-1.5 left-0 z-10 flex h-[26px] w-[27px] items-center justify-center rounded bg-[#d3dada]/50">
                  <span className="flex h-[18px] w-[18px] items-center justify-center rounded-full bg-[#a3aaab] font-['Liberation_Serif',serif] text-[12px] font-bold text-white">
                    0
                  </span>
                </span>
              </span>
              <Buttons names={["boolC", "undo", "redo", "regen", "panel"]} />
            </Toolbar>
          </div>
          <div className="ml-[47px]">
            <Toolbar>
              <Buttons names={["wire", "hidden", "shaded"]} />
            </Toolbar>
          </div>
        </div>

        <div className="ml-[607px] flex gap-[5px]">
          <Toolbar>
            <ToolButton icon="palette" />
            <span className="relative flex h-[14px] w-[84px]">
              <select aria-label="Color code" className="h-full w-full appearance-none border border-[#c2c8ca] bg-white pl-px outline-none">
                <option>Part defaults</option>
              </select>
              <ArrowCap />
            </span>
            <ToolButton icon="oliveCube" />
            <button type="button" aria-label="Color options" className="flex w-[10px] justify-center">
              <svg viewBox="0 0 6 4" className="w-[5px]" aria-hidden="true"><path d="M0 0H6L3 4Z" /></svg>
            </button>
          </Toolbar>
          <Toolbar>
            <Buttons
              names={["vpOne", "vpCascade", "vpRows", "vpCols", "vpLink", "panel", "noteArrow", "blueArrow", "noteA", "cursor", "panel", "list"]}
            />
          </Toolbar>
        </div>
      </div>

      {/* body */}
      <div className="flex">
        <aside className="flex w-[182px] shrink-0 flex-col bg-white pb-1 pl-px pr-px pt-[5px]">
          <div role="tablist" className="flex h-[15px]">
            <button role="tab" aria-selected="true" type="button" className="border-x border-t border-[#dde1e2] px-1">Model</button>
            <button role="tab" aria-selected="false" type="button" className="border-b border-r border-t border-[#dde1e2] bg-[#eef0f1] px-1">Results</button>
          </div>
          <div className="flex h-5 items-center gap-1">
            <span className="relative flex h-[14px] w-[119px] items-center border border-[#b4bbbd] bg-white pl-0.5">
              <Svg size={11}>{icons.database}</Svg>
              <select aria-label="Model tree source" className="h-full w-full appearance-none bg-transparent pl-px pr-2 outline-none">
                <option>Model Database</option>
              </select>
              <ArrowCap />
            </span>
            <Spinner color="#a9afb0" />
            <button type="button" aria-label="Up one level"><Svg size={12}>{icons.folderUp}</Svg></button>
            <button type="button" aria-label="Filter" className="ml-px"><Svg size={12}>{icons.filter}</Svg></button>
            <button type="button" aria-label="Tips" className="ml-px"><Svg size={12}>{icons.bulb}</Svg></button>
          </div>
          <ul role="tree" className="border border-[#b7bec0] pb-[3px]">
            {tree.map((node, i) => (
              <TreeRow key={i} node={node} />
            ))}
          </ul>
        </aside>

        <main className="flex min-w-0 flex-1 flex-col border-l-[3px] border-[#eceff0] bg-white">
          <div className="flex h-5 items-center gap-[7px] bg-gradient-to-b from-[#fcfdfd] to-[#eff2f2] pl-[3px]">
            <ModuleSelect label="Module:" value="Part" className="w-[70px]" />
            <ModuleSelect label="Model:" value="Model-1" className="w-[60px]" />
            <ModuleSelect label="Part:" value="Part-1" className="w-[60px]" />
          </div>
          <div className="flex min-h-0 flex-1">
            <Toolbox />
            <Viewport />
          </div>
          <div className="flex h-[23px] items-center justify-end gap-[3px] bg-gradient-to-b from-[#fdfdfd] to-[#e9eded] pr-px text-[#4ccf9b]">
            <svg viewBox="0 0 14 14" width="14" height="14" fill="none" stroke="currentColor" aria-hidden="true">
              <path d="M5 1H9L6 5Q9 6 6 10Q4 13 1 13L4 7M13 6Q9 6 10 8Q13 11 12 12Q10 13 7 13" strokeWidth="1.3" />
            </svg>
            <span className="font-['DejaVu_Sans',sans-serif] text-[11px] italic">SIMULIA</span>
          </div>
        </main>
      </div>

      {/* message area */}
      <footer className="flex flex-1 bg-[#ebefef] pr-[10px]">
        <div className="flex w-[26px] shrink-0 flex-col items-center border-r-2 border-[#e4e8e9] bg-white">
          <button type="button" aria-label="Messages" className="flex h-6 w-full items-center justify-center">
            <svg viewBox="0 0 14 14" width="13" height="13" fill="none" aria-hidden="true">
              <rect x="2.5" y="0.5" width="11" height="11" fill="#d6dccb" stroke="#3d423a" />
              <path d="M1 13L5 8L8 9M2 10L5 12" stroke="#5b6033" strokeWidth="1.8" />
            </svg>
          </button>
          <button type="button" aria-label="Command line" className="flex h-[22px] w-full items-center justify-center bg-[#e4e8ea]">
            <svg viewBox="0 0 15 15" width="15" height="15" fill="none" aria-hidden="true">
              <rect x="0.5" y="0.5" width="14" height="14" fill="#dfd95e" stroke="#57562a" />
              <path d="M2.5 5L4.5 7.5L2.5 10M6.5 5L8.5 7.5L6.5 10M10.5 5L12.5 7.5L10.5 10" stroke="#222" strokeWidth="1.3" />
            </svg>
          </button>
        </div>
        <div role="log" aria-label="Message area" className="flex-1 border-r border-t border-[#b3bcbe] bg-white" />
      </footer>
    </div>
  );
}
